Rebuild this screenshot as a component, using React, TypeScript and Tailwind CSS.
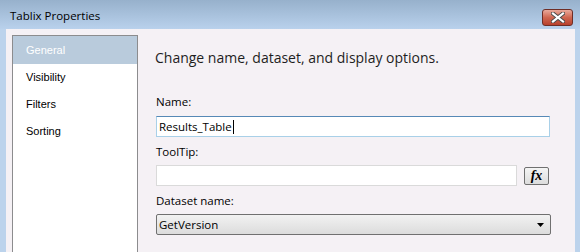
import React from "react";

const ui = { fontFamily: '"Open Sans", "Noto Sans", sans-serif' };
const nav = { fontFamily: '"Liberation Sans", Arial, sans-serif' };

export default function App() {
  return (
    <div className="w-[580px] h-[252px] overflow-hidden flex flex-col bg-[#bcd3ec]" style={ui}>
      {/* Title bar */}
      <div className="h-[29px] shrink-0 flex items-center justify-between pl-[10px] pr-[7px] bg-gradient-to-b from-[#97b1cc] to-[#b9d1ec]">
        <span className="text-[11.5px] text-black leading-none mt-[2px]">Tablix Properties</span>
        <div className="w-[31px] h-[17px] mt-[5px] rounded-[3px] border border-[#6e2e26] bg-gradient-to-b from-[#e9a99b] via-[#cf6650] to-[#b7402c] flex items-center justify-center">
          <svg width="14" height="11" viewBox="0 0 14 11">
            <path d="M2 1.5 L12 9.5 M12 1.5 L2 9.5" stroke="#4a4a4a" strokeWidth="4" strokeLinecap="square" />
            <path d="M2 1.5 L12 9.5 M12 1.5 L2 9.5" stroke="#ffffff" strokeWidth="2.2" strokeLinecap="square" />
          </svg>
        </div>
      </div>
      {/* Body */}
      <div className="flex-1 ml-[6px] mr-[5px] bg-[#f5f1f5] flex pt-[6px] pl-[6px]">
        {/* Left nav */}
        <div className="w-[126px] border border-[#8c8c8e] border-b-0 bg-white flex flex-col pt-0 text-[11px] text-black" style={nav}>
          <div className="h-[28px] bg-[#b9cbdc] text-white flex items-center pl-[13px]">General</div>
          <div className="h-[27px] flex items-center pl-[13px]">Visibility</div>
          <div className="h-[26px] flex items-center pl-[13px]">Filters</div>
          <div className="h-[28px] flex items-center pl-[13px]">Sorting</div>
        </div>
        {/* Right content */}
        <div className="flex-1 flex flex-col pl-[18px]">
          <div className="text-[14px] text-[#1e1e1e] mt-[13px] -ml-[1px] leading-[20px]">
            Change name, dataset, and display options.
          </div>
          <div className="text-[11.5px] text-black mt-[27px] leading-[14px]">Name:</div>
          <div className="mt-[7px] w-[394px] h-[21px] bg-white border border-[#a9d0e8] border-t-[#5689b6] flex items-center pl-[2px] text-[11.5px] text-black">
            <span>Results_Table</span>
            <span className="w-px h-[14px] bg-black ml-[1px]" />
          </div>
          <div className="text-[11.5px] text-black mt-[8px] leading-[14px]">ToolTip:</div>
          <div className="mt-[6px] flex items-center">
            <div className="w-[361px] h-[21px] bg-white border border-[#dadada]" />
            <div className="ml-[7px] w-[25px] h-[18px] rounded-[2px] border border-[#707070] bg-gradient-to-b from-[#f4f4f4] to-[#dcdcdc] flex items-center justify-center">
              <span className="text-[14px] font-bold italic leading-none text-black" style={{ fontFamily: '"Liberation Serif", serif' }}>fx</span>
            </div>
          </div>
          <div className="text-[11.5px] text-black mt-[8px] leading-[14px]">Dataset name:</div>
          <div className="mt-[6px] w-[395px] h-[21px] rounded-[2px] border border-[#707070] bg-gradient-to-b from-[#f2f2f2] to-[#dcdcdc] flex items-center justify-between pl-[2px] pr-[6px] text-[11.5px] text-black">
            <span>GetVersion</span>
            <svg width="7" height="4" viewBox="0 0 7 4"><path d="M0 0 H7 L3.5 4 Z" fill="#000" /></svg>
          </div>
        </div>
      </div>
    </div>
  );
}
